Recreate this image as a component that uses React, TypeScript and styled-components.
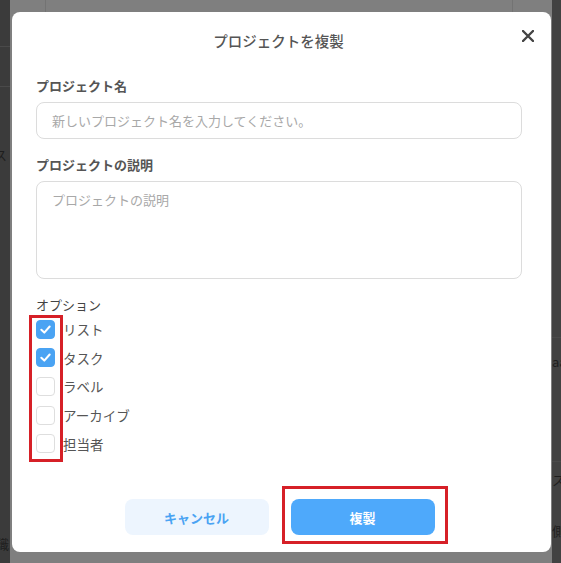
import React from "react";
import styled, { createGlobalStyle } from "styled-components";

const Global = createGlobalStyle`
  html, body { margin: 0; padding: 0; width: 561px; height: 563px; overflow: hidden; }
  body { font-family: "Noto Sans CJK JP", "Noto Sans", sans-serif; }
  * { box-sizing: border-box; }
`;

const Page = styled.div`
  display: flex;
  width: 561px;
  height: 563px;
  overflow: hidden;
`;

const Strip = styled.div<{ $w: number; $bg: string }>`
  width: ${(p) => p.$w}px;
  flex: none;
  background: ${(p) => p.$bg};
  display: flex;
  flex-direction: column;
  overflow: hidden;
`;

const StripRow = styled.div<{ $h: number; $line?: boolean }>`
  height: ${(p) => p.$h}px;
  flex: none;
  border-bottom: ${(p) => (p.$line ? "1px solid #4a4a4a" : "none")};
  font-size: 13px;
  line-height: ${(p) => p.$h}px;
  color: #1e1e1e;
  white-space: nowrap;
`;

const Center = styled.div`
  flex: 1;
  background: #7f7f7f;
  display: flex;
  flex-direction: column;
`;

const HeadRow = styled.div`
  display: grid;
  grid-template-columns: 36px 467px 1fr;
  height: 12px;
`;

const HeadCell = styled.div`
  border-right: 1px solid #737373;
  &:last-child { border-right: none; }
`;

const Overlay = styled.div`
  position: fixed;
  inset: 0;
  display: flex;
  align-items: flex-start;
  padding: 12px 0 0 12px;
`;

const Modal = styled.div`
  position: relative;
  width: 539px;
  height: 540px;
  background: #fff;
  border-radius: 8px;
  display: flex;
  flex-direction: column;
  padding: 19px 29px 17px 24px;
`;

const Title = styled.h2`
  margin: 0;
  font-size: 14.5px;
  line-height: 20px;
  font-weight: 500;
  color: #555;
  text-align: center;
  padding-right: 1px;
`;

const Close = styled.button`
  position: absolute;
  top: 18px;
  right: 17px;
  width: 12px;
  height: 12px;
  padding: 0;
  border: none;
  background: none;
  display: flex;
  align-items: center;
  justify-content: center;
`;

const Label = styled.label<{ $top: number }>`
  display: block;
  margin-top: ${(p) => p.$top}px;
  font-size: 13px;
  line-height: 20px;
  font-weight: 700;
  color: #555;
`;

const OptionsLabel = styled.div`
  margin-top: 16px;
  font-size: 13px;
  line-height: 20px;
  color: #444;
`;

const Input = styled.input`
  display: block;
  margin-top: 6px;
  width: 100%;
  height: 37px;
  border: 1px solid #dcdcdc;
  border-radius: 8px;
  padding: 0 15px;
  font-family: inherit;
  font-size: 13px;
  color: #333;
  outline: none;
  &::placeholder { color: #a8a8a8; }
`;

const TextArea = styled.textarea`
  display: block;
  margin-top: 6px;
  width: 100%;
  height: 98px;
  border: 1px solid #dcdcdc;
  border-radius: 8px;
  padding: 8px 15px;
  font-family: inherit;
  font-size: 13px;
  line-height: 20px;
  resize: none;
  outline: none;
  &::placeholder { color: #a8a8a8; }
`;

const OptionList = styled.div`
  position: relative;
  display: flex;
  flex-direction: column;
`;

const Option = styled.div`
  height: 28.6px;
  display: flex;
  align-items: center;
  gap: 8px;
  font-size: 13.5px;
  color: #555;
`;

const Box = styled.span<{ $on: boolean }>`
  width: 19px;
  height: 19px;
  flex: none;
  border-radius: 4px;
  display: flex;
  align-items: center;
  justify-content: center;
  background: ${(p) => (p.$on ? "#4aa3f3" : "#fff")};
  border: 1px solid ${(p) => (p.$on ? "#4aa3f3" : "#dedede")};
`;

const Highlight = styled.div<{ $l: number; $t: number; $w: number; $h: number }>`
  position: absolute;
  left: ${(p) => p.$l}px;
  top: ${(p) => p.$t}px;
  width: ${(p) => p.$w}px;
  height: ${(p) => p.$h}px;
  border: 3.5px solid #d62027;
  pointer-events: none;
`;

const Footer = styled.div`
  margin-top: auto;
  display: flex;
  justify-content: center;
  gap: 22px;
  padding-left: 1px;
`;

const BtnWrap = styled.div`
  position: relative;
`;

const Button = styled.button<{ $primary?: boolean }>`
  width: 144px;
  height: 36px;
  border: none;
  border-radius: 8px;
  font-family: inherit;
  font-size: 13px;
  font-weight: 700;
  background: ${(p) => (p.$primary ? "#4ea9fb" : "#edf5fe")};
  color: ${(p) => (p.$primary ? "#fff" : "#4aa3f3")};
`;

const options = [
  { label: "リスト", on: true },
  { label: "タスク", on: true },
  { label: "ラベル", on: false },
  { label: "アーカイブ", on: false },
  { label: "担当者", on: false },
];

const Check = () => (
  <svg width="13" height="13" viewBox="0 0 14 14" fill="none">
    <path d="M2.5 7.3 L5.7 10.3 L11.5 3.8" stroke="#fff" strokeWidth="2.2" strokeLinecap="round" strokeLinejoin="round" />
  </svg>
);

export default function App() {
  return (
    <>
      <Global />
      <Page>
        <Strip $w={10} $bg="#3b3b3b">
          <StripRow $h={47} $line />
          <StripRow $h={40} $line />
          <StripRow $h={33} />
          <StripRow $h={70}>
            <span style={{ marginLeft: -6 }}>ス</span>
          </StripRow>
          <StripRow $h={337} />
          <StripRow $h={33}>
            <span style={{ marginLeft: -4 }}>識</span>
          </StripRow>
        </Strip>
        <Center>
          <HeadRow>
            <HeadCell />
            <HeadCell />
            <HeadCell />
          </HeadRow>
        </Center>
        <Strip $w={9} $bg="#424242">
          <StripRow $h={338} $line />
          <StripRow $h={48}>aa</StripRow>
          <StripRow $h={76} $line />
          <StripRow $h={36}>ス</StripRow>
          <StripRow $h={65}>側</StripRow>
        </Strip>
      </Page>
      <Overlay>
        <Modal>
          <Title>プロジェクトを複製</Title>
          <Close aria-label="閉じる">
            <svg width="12" height="12" viewBox="0 0 12 12">
              <path d="M1 1 L11 11 M11 1 L1 11" stroke="#444" strokeWidth="2.4" strokeLinecap="round" />
            </svg>
          </Close>
          <Label $top={25}>プロジェクト名</Label>
          <Input placeholder="新しいプロジェクト名を入力してください。" />
          <Label $top={16}>プロジェクトの説明</Label>
          <TextArea placeholder="プロジェクトの説明" />
          <OptionsLabel>オプション</OptionsLabel>
          <OptionList>
            {options.map((o) => (
              <Option key={o.label}>
                <Box $on={o.on}>{o.on && <Check />}</Box>
                {o.label}
              </Option>
            ))}
            <Highlight $l={-7} $t={0} $w={34} $h={147} />
          </OptionList>
          <Footer>
            <BtnWrap>
              <Button>キャンセル</Button>
            </BtnWrap>
            <BtnWrap>
              <Button $primary>複製</Button>
              <Highlight $l={-9} $t={-13} $w={166} $h={58} />
            </BtnWrap>
          </Footer>
        </Modal>
      </Overlay>
    </>
  );
}
